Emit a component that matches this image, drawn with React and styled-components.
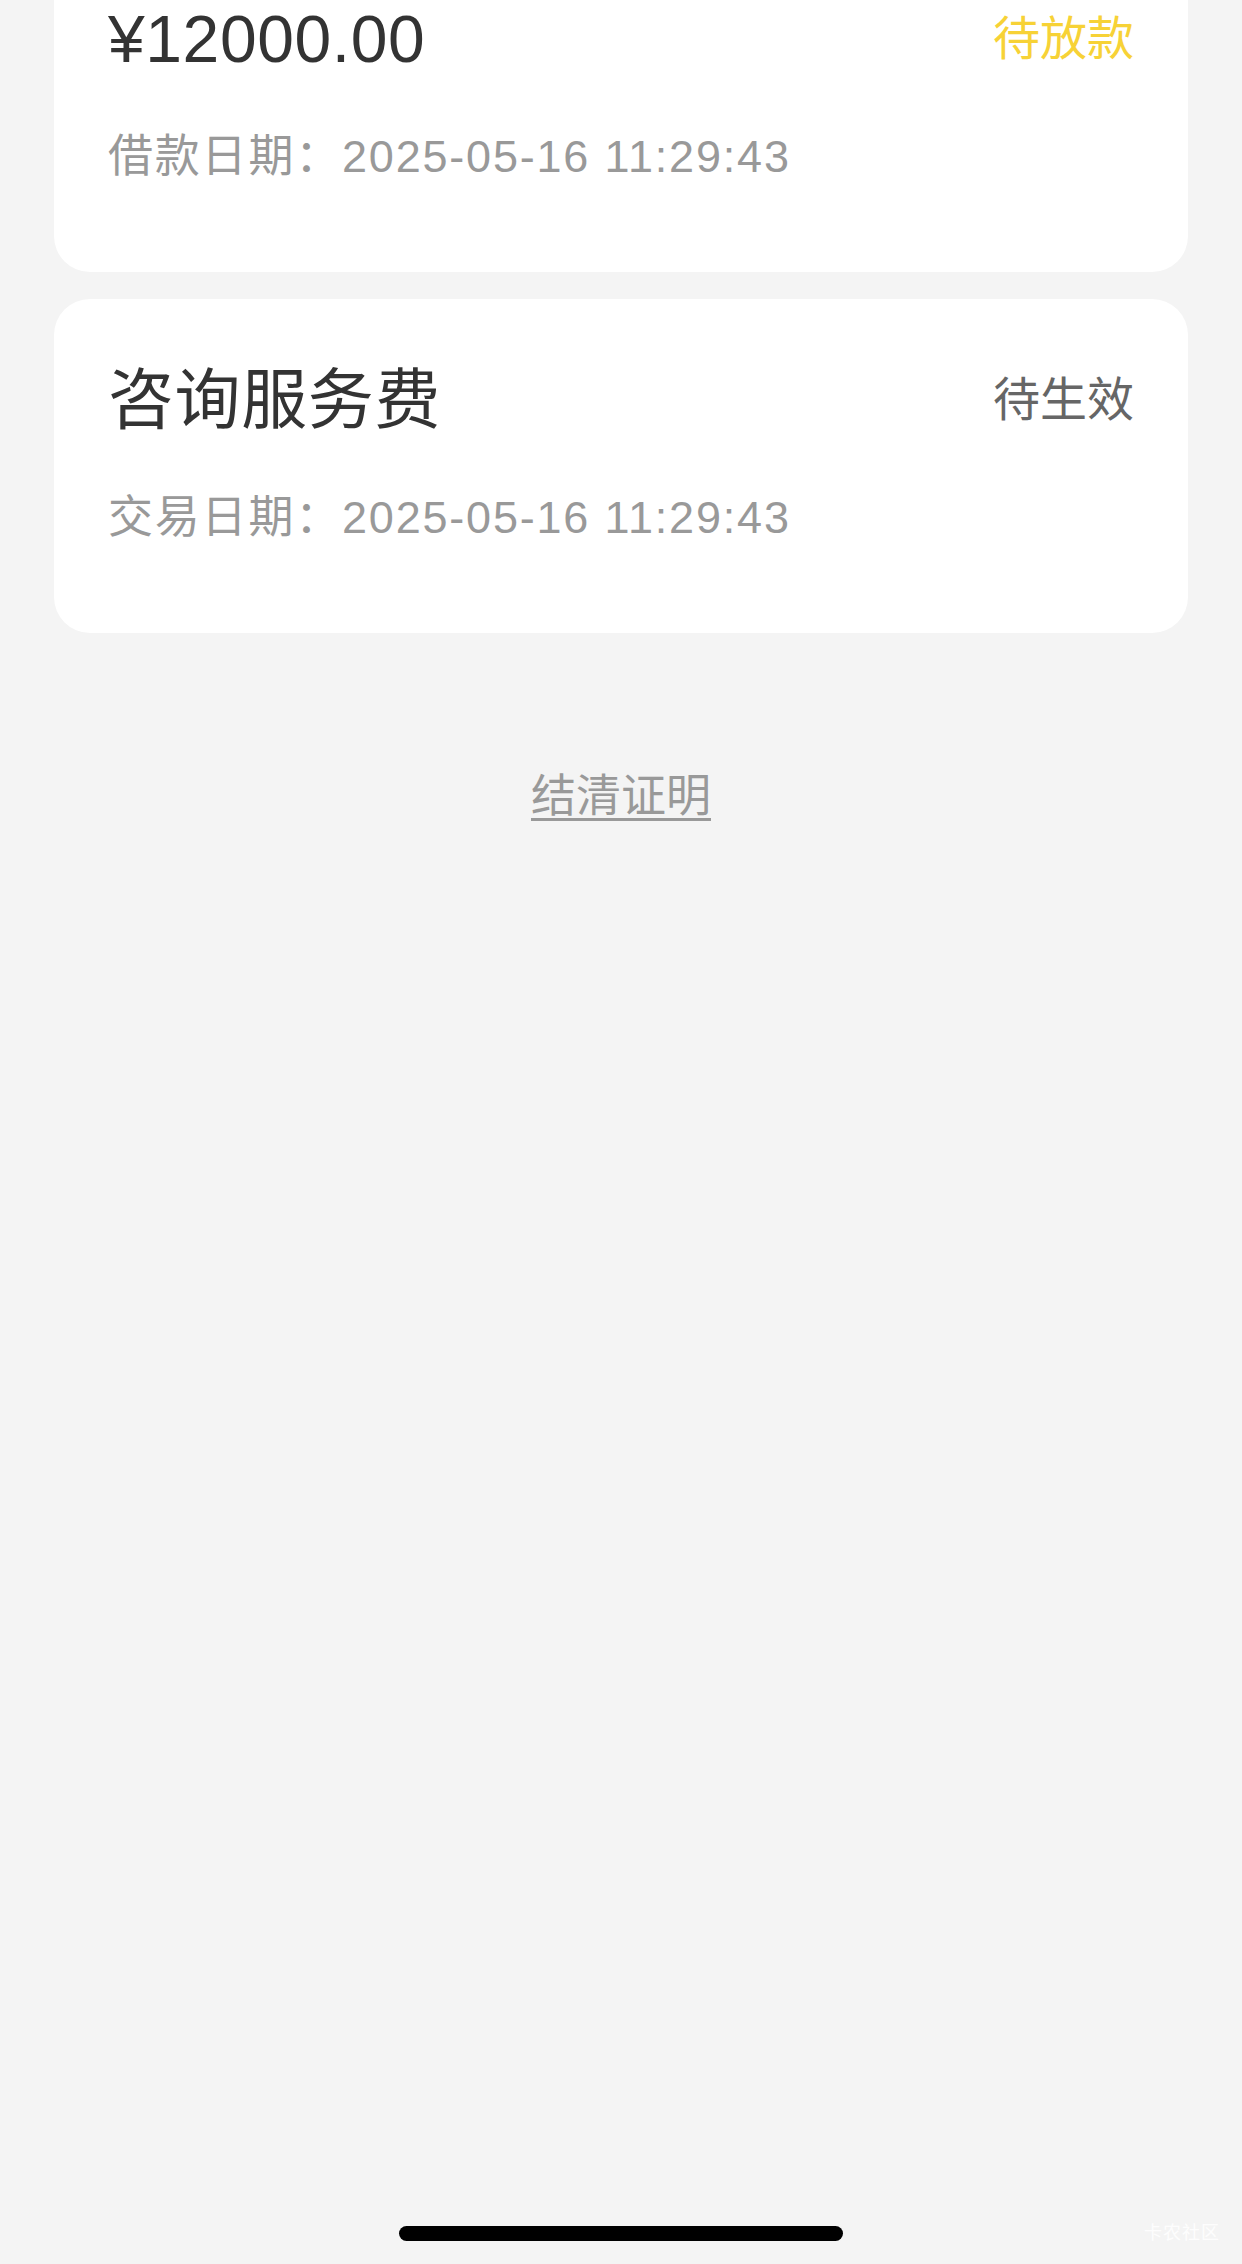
import React from "react";
import styled, { createGlobalStyle } from "styled-components";

const bg = "#f4f4f4";
const dark = "#333333";
const grey = "#999999";

const Global = createGlobalStyle`
  html, body {
    margin: 0;
    padding: 0;
    background: ${bg};
  }
  body {
    font-family: "Liberation Sans", "Noto Sans CJK SC", sans-serif;
    -webkit-font-smoothing: antialiased;
  }
`;

const Page = styled.div`
  position: relative;
  width: 1242px;
  height: 2264px;
  overflow: hidden;
  background: ${bg};
  display: flex;
  flex-direction: column;
  align-items: center;
`;

const List = styled.div`
  width: 100%;
  box-sizing: border-box;
  padding: 0 54px;
  margin-top: -62px;
  display: flex;
  flex-direction: column;
  gap: 27px;
`;

const Card = styled.div`
  background: #ffffff;
  border-radius: 36px;
  padding: 61px 54px 88px;
`;

const Row = styled.div`
  height: 80px;
  display: flex;
  align-items: center;
  justify-content: space-between;
`;

const Title = styled.div`
  font-size: 66px;
  line-height: 80px;
  letter-spacing: 0.6px;
  color: ${dark};
`;

const Status = styled.div`
  font-size: 47px;
  line-height: 60px;
  color: ${(p) => p.$color};
`;

const DateLine = styled.div`
  margin-top: 51px;
  font-size: 45px;
  line-height: 54px;
  letter-spacing: 1.8px;
  color: ${grey};
  white-space: nowrap;
`;

const Settle = styled.a`
  margin-top: 137px;
  font-size: 45px;
  line-height: 54px;
  color: ${grey};
  text-decoration: underline;
  text-decoration-thickness: 3px;
  text-underline-offset: 6px;
  cursor: pointer;
`;

const HomeBar = styled.div`
  margin-top: auto;
  margin-bottom: 23px;
  width: 444px;
  height: 15px;
  border-radius: 8px;
  background: #000;
`;

const Watermark = styled.div`
  position: absolute;
  right: 22px;
  bottom: 20px;
  font-size: 18px;
  color: rgba(255, 255, 255, 0.9);
  letter-spacing: 1px;
`;

const records = [
  { title: "¥12000.00", status: "待放款", color: "#f7d236", label: "借款日期", date: "2025-05-16 11:29:43" },
  { title: "咨询服务费", status: "待生效", color: "#666666", label: "交易日期", date: "2025-05-16 11:29:43" },
];

export default function App() {
  return (
    <Page>
      <Global />
      <List>
        {records.map((r) => (
          <Card key={r.label}>
            <Row>
              <Title>{r.title}</Title>
              <Status $color={r.color}>{r.status}</Status>
            </Row>
            <DateLine>
              {r.label}：{r.date}
            </DateLine>
          </Card>
        ))}
      </List>
      <Settle>结清证明</Settle>
      <HomeBar />
      <Watermark>卡农社区</Watermark>
    </Page>
  );
}
